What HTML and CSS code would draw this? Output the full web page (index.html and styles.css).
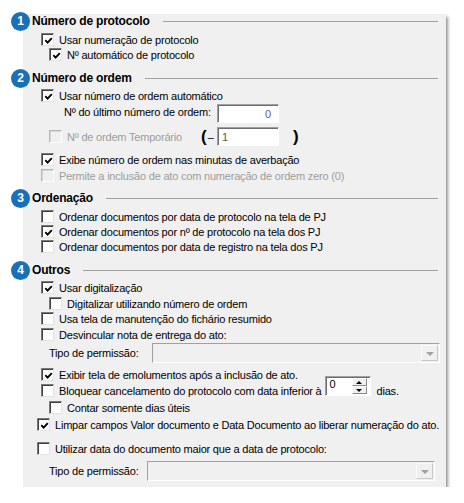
FILE: index.html
```html
<!DOCTYPE html>
<html lang="pt">
<head>
<meta charset="utf-8">
<title>Configurações</title>
<link rel="stylesheet" href="styles.css">
</head>
<body>
<div class="panel">
  <div class="heading"><span class="badge">1</span><span class="htext">Número de protocolo</span><span class="hline"></span></div>
  <div class="row lv1 mt5"><span class="cb"><svg viewBox="0 0 9 9"><path d="M1.3 4.2 L3.6 6.6 L7.8 2.1"/></svg></span>Usar numeração de protocolo</div>
  <div class="row lv2"><span class="cb"><svg viewBox="0 0 9 9"><path d="M1.3 4.2 L3.6 6.6 L7.8 2.1"/></svg></span>Nº automático de protocolo</div>

  <div class="heading mt10"><span class="badge">2</span><span class="htext">Número de ordem</span><span class="hline"></span></div>
  <div class="row lv1 mt4"><span class="cb"><svg viewBox="0 0 9 9"><path d="M1.3 4.2 L3.6 6.6 L7.8 2.1"/></svg></span>Usar número de ordem automático</div>
  <div class="row tall lvlabel mt1"><span class="lbl-ultimo">Nº do último número de ordem:</span><span class="field num">0</span></div>
  <div class="row tall lv2 mt4"><span class="check-wrap disabled"><span class="cb off"></span>Nº de ordem Temporário</span><span class="paren-open"><span class="paren">(</span><span class="dash">–</span></span><span class="field temp">1</span><span class="paren paren-close">)</span></div>
  <div class="row lv1 mt6"><span class="cb"><svg viewBox="0 0 9 9"><path d="M1.3 4.2 L3.6 6.6 L7.8 2.1"/></svg></span>Exibe número de ordem nas minutas de averbação</div>
  <div class="row lv1 mt1 disabled"><span class="cb off"></span>Permite a inclusão de ato com numeração de ordem zero (0)</div>

  <div class="heading mt9"><span class="badge">3</span><span class="htext">Ordenação</span><span class="hline"></span></div>
  <div class="row lv1 mt5"><span class="cb"></span>Ordenar documentos por data de protocolo na tela de PJ</div>
  <div class="row lv1"><span class="cb"><svg viewBox="0 0 9 9"><path d="M1.3 4.2 L3.6 6.6 L7.8 2.1"/></svg></span>Ordenar documentos por nº de protocolo na tela dos PJ</div>
  <div class="row lv1"><span class="cb"></span>Ordenar documentos por data de registro na tela dos PJ</div>

  <div class="heading mt10"><span class="badge">4</span><span class="htext">Outros</span><span class="hline"></span></div>
  <div class="row lv1 mt4"><span class="cb"><svg viewBox="0 0 9 9"><path d="M1.3 4.2 L3.6 6.6 L7.8 2.1"/></svg></span>Usar digitalização</div>
  <div class="row lv2 mt1"><span class="cb"></span>Digitalizar utilizando número de ordem</div>
  <div class="row lv1"><span class="cb"></span>Usa tela de manutenção do fichário resumido</div>
  <div class="row lv1 mt1"><span class="cb"></span>Desvincular nota de entrega do ato:</div>
  <div class="row combo-row lv2 mt1"><span class="lbl-tipo">Tipo de permissão:</span><span class="select wide"><span class="drop"><span class="arrow"></span></span></span></div>
  <div class="row lv1 mt4"><span class="cb"><svg viewBox="0 0 9 9"><path d="M1.3 4.2 L3.6 6.6 L7.8 2.1"/></svg></span>Exibir tela de emolumentos após a inclusão de ato.</div>
  <div class="row lv1 mt1"><span class="cb"></span>Bloquear cancelamento do protocolo com data inferior à<span class="spin"><span class="spin-val">0</span><span class="spin-btns"><span class="spin-btn"><span class="up"></span></span><span class="spin-btn"><span class="down"></span></span></span></span><span class="dias">dias.</span></div>
  <div class="row lv2 mt2"><span class="cb"></span>Contar somente dias úteis</div>
  <div class="row lv0 mt2"><span class="cb"><svg viewBox="0 0 9 9"><path d="M1.3 4.2 L3.6 6.6 L7.8 2.1"/></svg></span>Limpar campos Valor documento e Data Documento ao liberar numeração do ato.</div>
  <div class="row lv0 mt9"><span class="cb"></span>Utilizar data do documento maior que a data de protocolo:</div>
  <div class="row combo-row lv2 mt5"><span class="lbl-tipo short">Tipo de permissão:</span><span class="select narrow"><span class="drop"><span class="arrow"></span></span></span></div>
</div>
</body>
</html>
```
FILE: styles.css
```css
html, body {
  margin: 0;
  background: #ffffff;
}
body {
  font-family: "Liberation Sans", Arial, sans-serif;
  font-size: 11px;
  letter-spacing: -0.2px;
  color: #000;
}
.panel {
  margin: 15px 0 0 24px;
  width: 422px;
  height: 472px;
  background: #f0f0f0;
  box-shadow: 0 0 1px rgba(0,0,0,0.25), 2px 2px 3px rgba(0,0,0,0.4);
  display: flex;
  flex-direction: column;
}
.heading {
  position: relative;
  display: flex;
  align-items: center;
  height: 12px;
  margin: 0 8px;
  font-size: 12px;
  font-weight: bold;
  white-space: nowrap;
}
.hline {
  flex: 1;
  height: 1px;
  margin-left: 13px;
  background: #a0a0a0;
}
.badge {
  position: absolute;
  left: -21px;
  top: 50%;
  width: 19px;
  height: 19px;
  margin-top: -9.5px;
  border-radius: 50%;
  background: #1a70b8;
  color: #fff;
  font-size: 12px;
  font-weight: bold;
  letter-spacing: 0;
  display: flex;
  align-items: center;
  justify-content: center;
}
.row {
  display: flex;
  align-items: center;
  height: 15px;
  white-space: nowrap;
}
.row.tall { height: 19px; }
.row.combo-row { height: 20px; }
.lv0 { padding-left: 13px; }
.lv1 { padding-left: 17px; }
.lv2 { padding-left: 25px; }
.lvlabel { padding-left: 40px; }
.mt1 { margin-top: 1px; }
.mt2 { margin-top: 2px; }
.mt4 { margin-top: 4px; }
.mt5 { margin-top: 5px; }
.mt6 { margin-top: 6px; }
.mt9 { margin-top: 9px; }
.mt10 { margin-top: 10px; }

.cb {
  flex: none;
  box-sizing: border-box;
  width: 13px;
  height: 13px;
  margin-right: 5px;
  border: 1px solid;
  border-color: #7a7a7a #e3e3e3 #e3e3e3 #7a7a7a;
  box-shadow: inset 1px 1px 0 #404040;
  background: #fff;
  display: flex;
  align-items: center;
  justify-content: center;
}
.cb svg {
  width: 9px;
  height: 9px;
  margin: 1px 0 0 1px;
}
.cb svg path {
  fill: none;
  stroke: #000;
  stroke-width: 1.9;
}
.cb.off {
  border-color: #b4b4b4 #ffffff #ffffff #b4b4b4;
  box-shadow: inset 1px 1px 0 #d8d8d8;
  background: #f0f0f0;
}
.disabled { color: #9d9d9d; }

.check-wrap {
  display: flex;
  align-items: center;
  width: 152px;
}
.lbl-ultimo { width: 153px; margin-top: -4px; }
.field {
  box-sizing: border-box;
  height: 19px;
  width: 62px;
  padding: 0 7px 0 4px;
  background: #fff;
  border: 1px solid;
  border-color: #a0a0a0 #ffffff #ffffff #a0a0a0;
  box-shadow: inset 1px 1px 0 #6d6d6d;
  display: flex;
  align-items: center;
}
.field.num {
  justify-content: flex-end;
  color: #5a58a8;
}
.field.temp { color: #5e5650; }
.paren-open {
  display: flex;
  align-items: center;
  width: 16px;
}
.paren {
  font-size: 17px;
  font-weight: bold;
  letter-spacing: 0;
  line-height: 17px;
}
.dash { margin-left: 1px; }
.paren-close { margin-left: 14px; }

.lbl-tipo { width: 103px; }
.lbl-tipo.short { width: 98px; }
.select {
  box-sizing: border-box;
  height: 20px;
  padding: 1px;
  border: 1px solid;
  border-color: #a0a0a0 #ffffff #ffffff #a0a0a0;
  background: #f0f0f0;
  display: flex;
  justify-content: flex-end;
}
.select.wide { width: 288px; }
.select.narrow { width: 288px; }
.drop {
  box-sizing: border-box;
  width: 17px;
  height: 16px;
  border: 1px solid;
  border-color: #fbfbfb #c8c8c8 #c8c8c8 #fbfbfb;
  display: flex;
  align-items: center;
  justify-content: center;
}
.arrow {
  width: 0;
  height: 0;
  margin-top: 2px;
  border-left: 4px solid transparent;
  border-right: 4px solid transparent;
  border-top: 4px solid #a0a0a0;
}

.spin {
  box-sizing: border-box;
  align-self: flex-start;
  margin: -7px 0 0 3px;
  width: 46px;
  height: 20px;
  border: 1px solid;
  border-color: #a0a0a0 #ffffff #ffffff #a0a0a0;
  box-shadow: inset 1px 1px 0 #6d6d6d;
  background: #fff;
  display: flex;
}
.spin-val {
  flex: 1;
  padding: 1px 0 0 4px;
  line-height: 12px;
}
.spin-btns {
  width: 15px;
  padding: 1px 3px 1px 0;
  display: flex;
  flex-direction: column;
}
.spin-btn {
  flex: 1;
  box-sizing: border-box;
  border: 1px solid;
  border-color: #ffffff #8a8a8a #8a8a8a #ffffff;
  background: #f0f0f0;
  display: flex;
  align-items: center;
  justify-content: center;
}
.up, .down {
  width: 0;
  height: 0;
  border-left: 3px solid transparent;
  border-right: 3px solid transparent;
}
.up { border-bottom: 3px solid #000; }
.down { border-top: 3px solid #000; }
.dias { margin-left: 6px; }
```
